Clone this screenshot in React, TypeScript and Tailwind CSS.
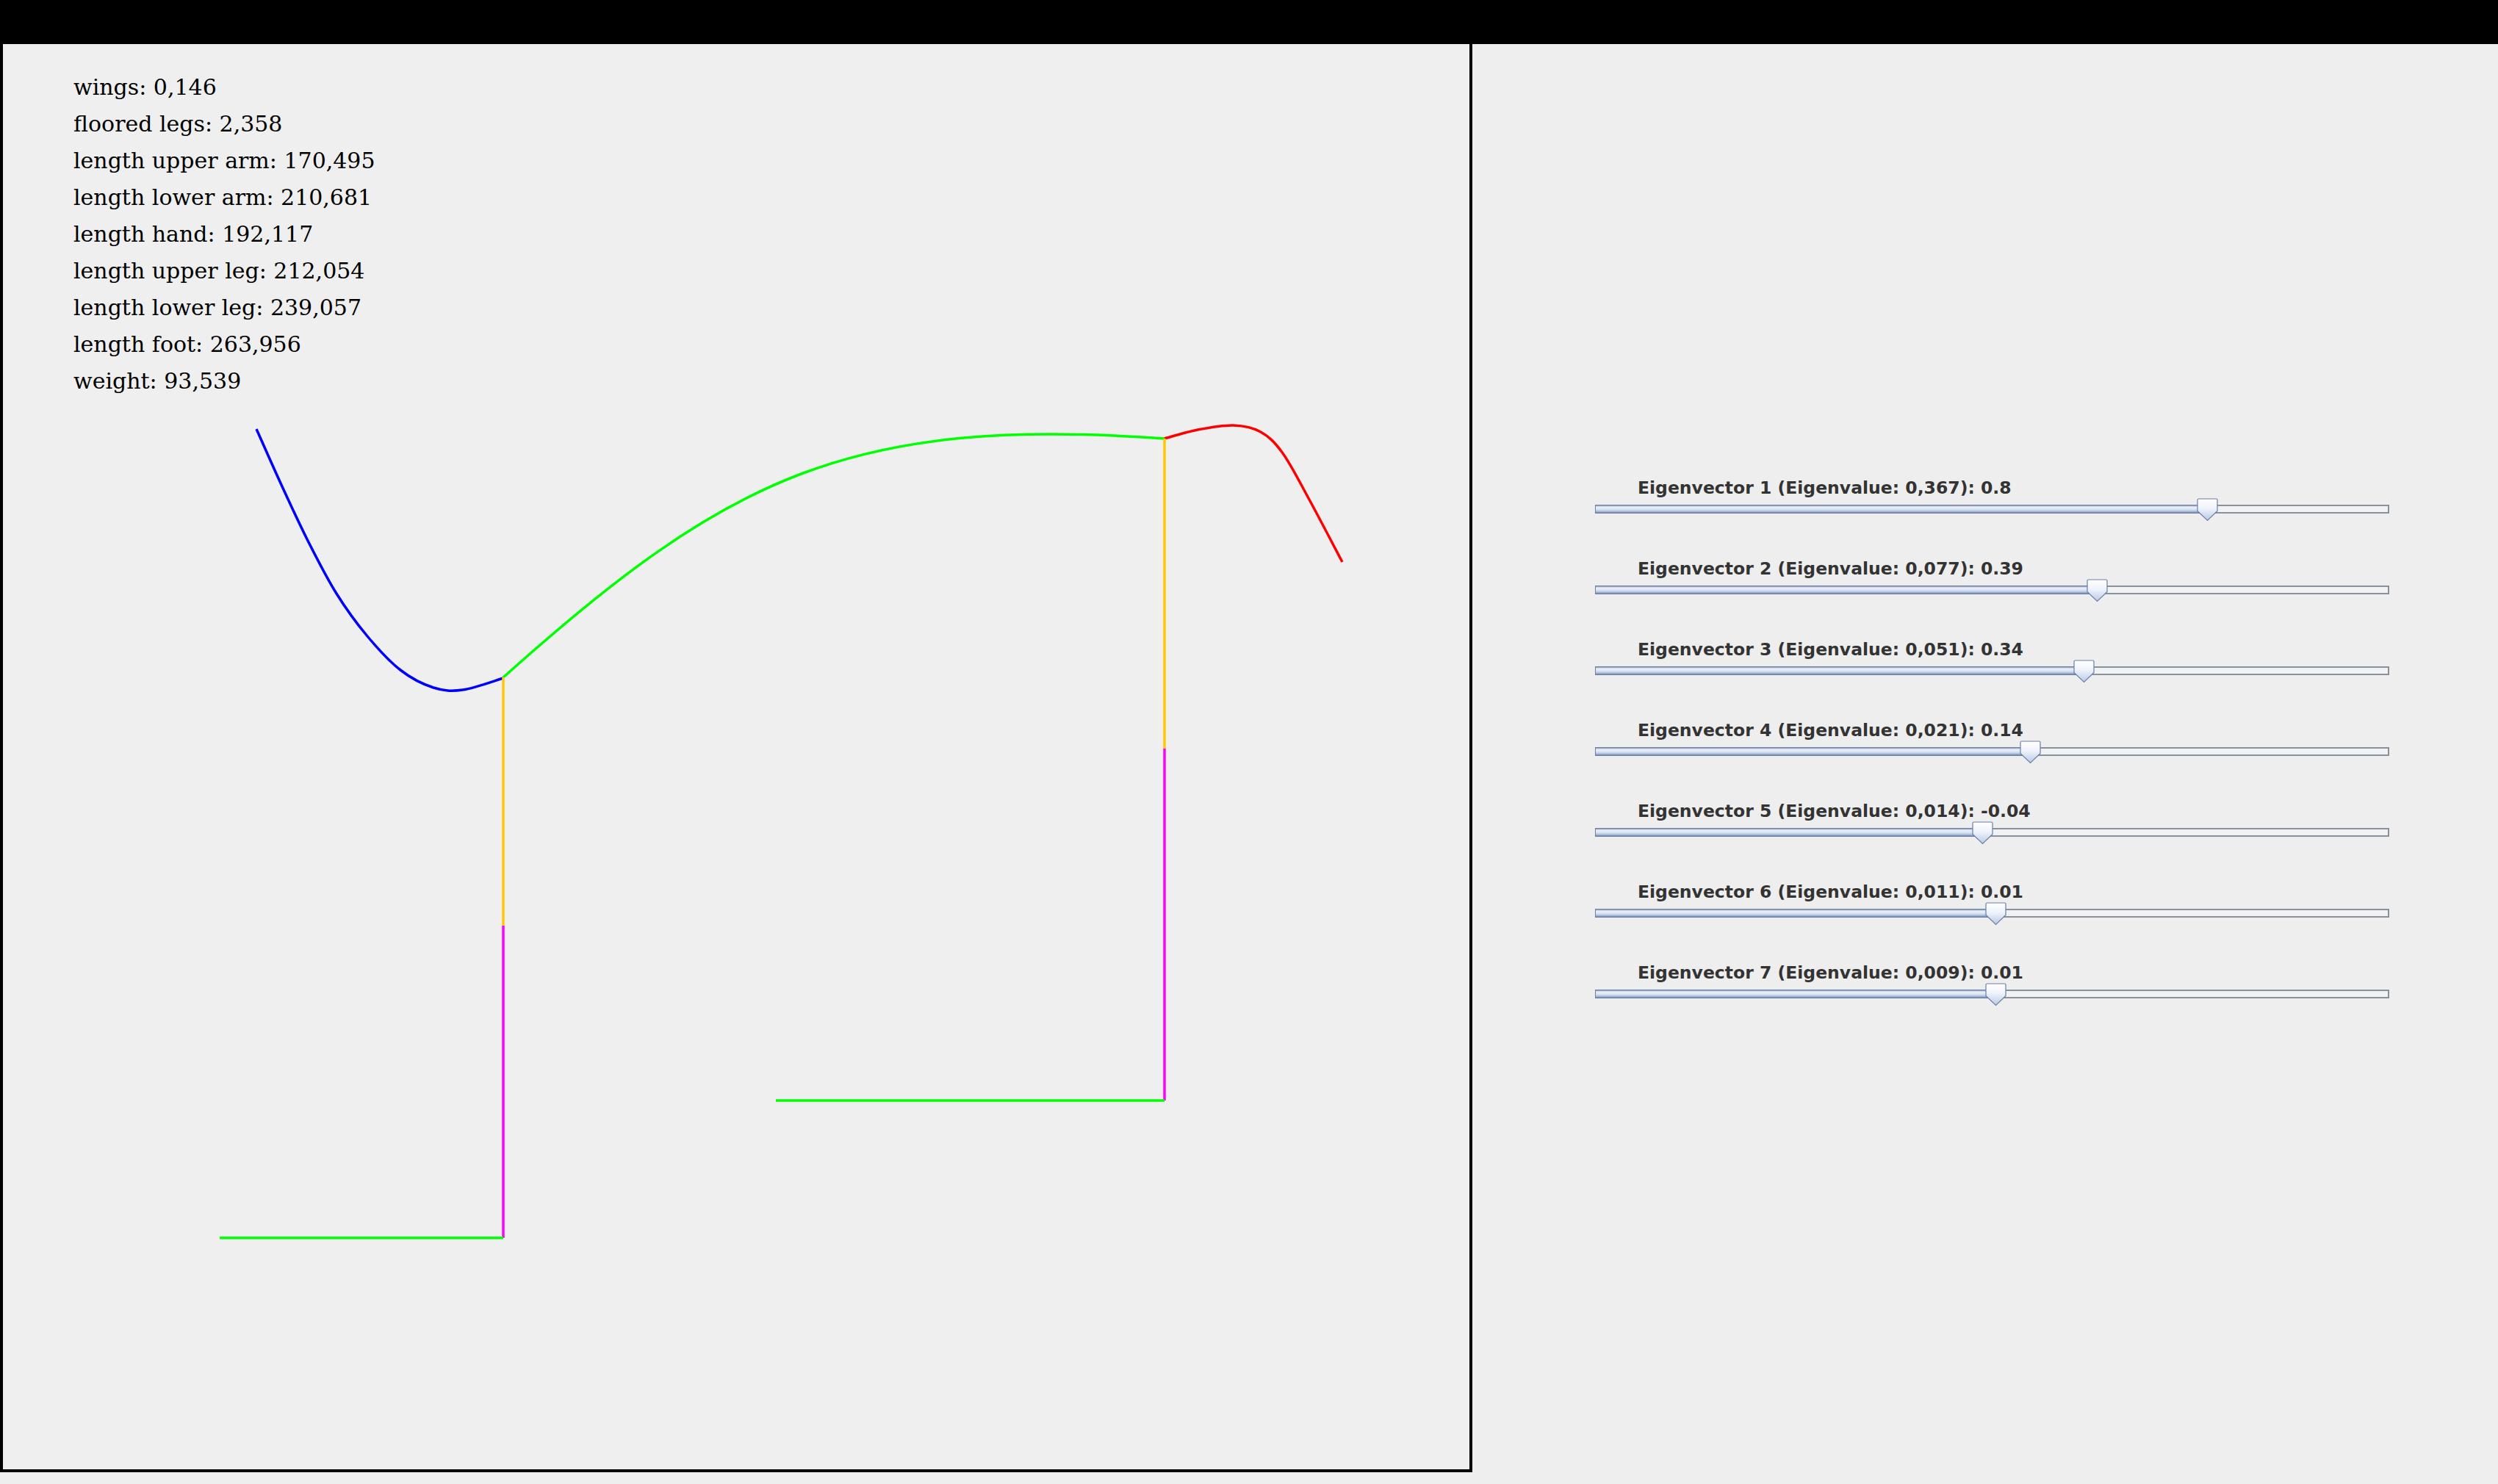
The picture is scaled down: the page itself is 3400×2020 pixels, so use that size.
import React from 'react';

type Pt = [number, number];

// stats printed in the top-left corner of the drawing panel
const stats = [
  'wings: 0,146',
  'floored legs: 2,358',
  'length upper arm: 170,495',
  'length lower arm: 210,681',
  'length hand: 192,117',
  'length upper leg: 212,054',
  'length lower leg: 239,057',
  'length foot: 263,956',
  'weight: 93,539',
];

const eigen = [
  { n: 1, ev: '0,367', v: 0.8 },
  { n: 2, ev: '0,077', v: 0.39 },
  { n: 3, ev: '0,051', v: 0.34 },
  { n: 4, ev: '0,021', v: 0.14 },
  { n: 5, ev: '0,014', v: -0.04 },
  { n: 6, ev: '0,011', v: 0.01 },
  { n: 7, ev: '0,009', v: 0.01 },
];

const blue: Pt[] = [
  [349, 584], [383, 660], [420, 738], [458, 808], [500, 866],
  [545, 912], [590, 936], [630, 939], [685, 923],
];
const red: Pt[] = [
  [1585, 597], [1630, 585], [1679, 579], [1716, 588], [1746, 617],
  [1782, 680], [1827, 765],
];

// catmull-rom through the points, as cubic beziers
function smooth(pts: Pt[]) {
  let d = `M${pts[0][0]} ${pts[0][1]}`;
  for (let i = 0; i < pts.length - 1; i++) {
    const p0 = pts[i - 1] || pts[i];
    const p1 = pts[i];
    const p2 = pts[i + 1];
    const p3 = pts[i + 2] || p2;
    const c1x = p1[0] + (p2[0] - p0[0]) / 6;
    const c1y = p1[1] + (p2[1] - p0[1]) / 6;
    const c2x = p2[0] - (p3[0] - p1[0]) / 6;
    const c2y = p2[1] - (p3[1] - p1[1]) / 6;
    d += ` C${c1x} ${c1y} ${c2x} ${c2y} ${p2[0]} ${p2[1]}`;
  }
  return d;
}

const Figure: React.FC = () => (
  <svg className="absolute inset-0" width={1996} height={1940} viewBox="4 60 1996 1940" fill="none" strokeWidth={3.5}>
    <path d={smooth(blue)} stroke="#0000ff" />
    <path d="M685 922 C993 646 1160 567 1585 597" stroke="#00ff00" />
    <path d={smooth(red)} stroke="#ff0000" />
    {/* left leg */}
    <line x1={685} y1={922} x2={685} y2={1260} stroke="#ffc800" />
    <line x1={685} y1={1260} x2={685} y2={1685} stroke="#ff00ff" />
    <line x1={299} y1={1685} x2={685} y2={1685} stroke="#00ff00" />
    {/* right leg */}
    <line x1={1585} y1={597} x2={1585} y2={1019} stroke="#ffc800" />
    <line x1={1585} y1={1019} x2={1585} y2={1498} stroke="#ff00ff" />
    <line x1={1056} y1={1498} x2={1585} y2={1498} stroke="#00ff00" />
  </svg>
);

const Thumb: React.FC = () => (
  <svg width={29} height={32} viewBox="0 0 29 32">
    <defs>
      <linearGradient id="thumbFill" x1="0" y1="0" x2="0" y2="1">
        <stop offset="0" stopColor="#ffffff" />
        <stop offset="0.45" stopColor="#eef3fb" />
        <stop offset="1" stopColor="#b7c9e5" />
      </linearGradient>
    </defs>
    <path d="M2.5 1 H26.5 Q28 1 28 2.5 V17.5 L14.5 30.5 L1 17.5 V2.5 Q1 1 2.5 1 Z" fill="url(#thumbFill)" stroke="#6a7fa7" strokeWidth={1.2} />
  </svg>
);

const Slider: React.FC<{ n: number; ev: string; v: number }> = ({ n, ev, v }) => {
  const pos = 542 + 364 * v;
  return (
    <div className="flex flex-col">
      <div className="h-[28px] pl-[58px] font-['DejaVu_Sans',sans-serif] font-bold text-[23.5px] leading-[28px] text-[#333333] whitespace-nowrap">
        Eigenvector {n} (Eigenvalue: {ev}): {v}
      </div>
      <div className="relative h-[32px]">
        <div className="mt-[9px] flex h-[12px]">
          <div
            className="h-full border border-[#6f80a6] bg-[linear-gradient(to_bottom,#8190b0_0%,#eaf0f9_20%,#dde6f3_50%,#b3c5e0_78%,#7083a9_100%)]"
            style={{ width: pos }}
          />
          <div className="h-full flex-1 border-y-2 border-r-2 border-[#88919c] bg-[#f1f2f4]" />
        </div>
        <div className="absolute top-0" style={{ left: pos - 14.5 }}>
          <Thumb />
        </div>
      </div>
    </div>
  );
};

export default function App() {
  return (
    <div className="flex h-[2020px] w-[3400px] flex-col overflow-hidden bg-[#eeeeee]">
      <div className="h-[60px] shrink-0 bg-black" />
      <div className="flex">
        <div className="relative h-[1944px] w-[2004px] shrink-0 border-x-4 border-b-4 border-black bg-[#efefef]">
          <Figure />
          <div className="relative pl-[96px] pt-[34px] font-['DejaVu_Serif',serif] text-[30px] leading-[50px] text-black">
            {stats.map(s => (
              <div key={s}>{s}</div>
            ))}
          </div>
        </div>
        <div className="flex-1 pl-[167px] pt-[590px]">
          <div className="flex w-[1081px] flex-col gap-[50px]">
            {eigen.map(e => (
              <Slider key={e.n} n={e.n} ev={e.ev} v={e.v} />
            ))}
          </div>
        </div>
      </div>
    </div>
  );
}
